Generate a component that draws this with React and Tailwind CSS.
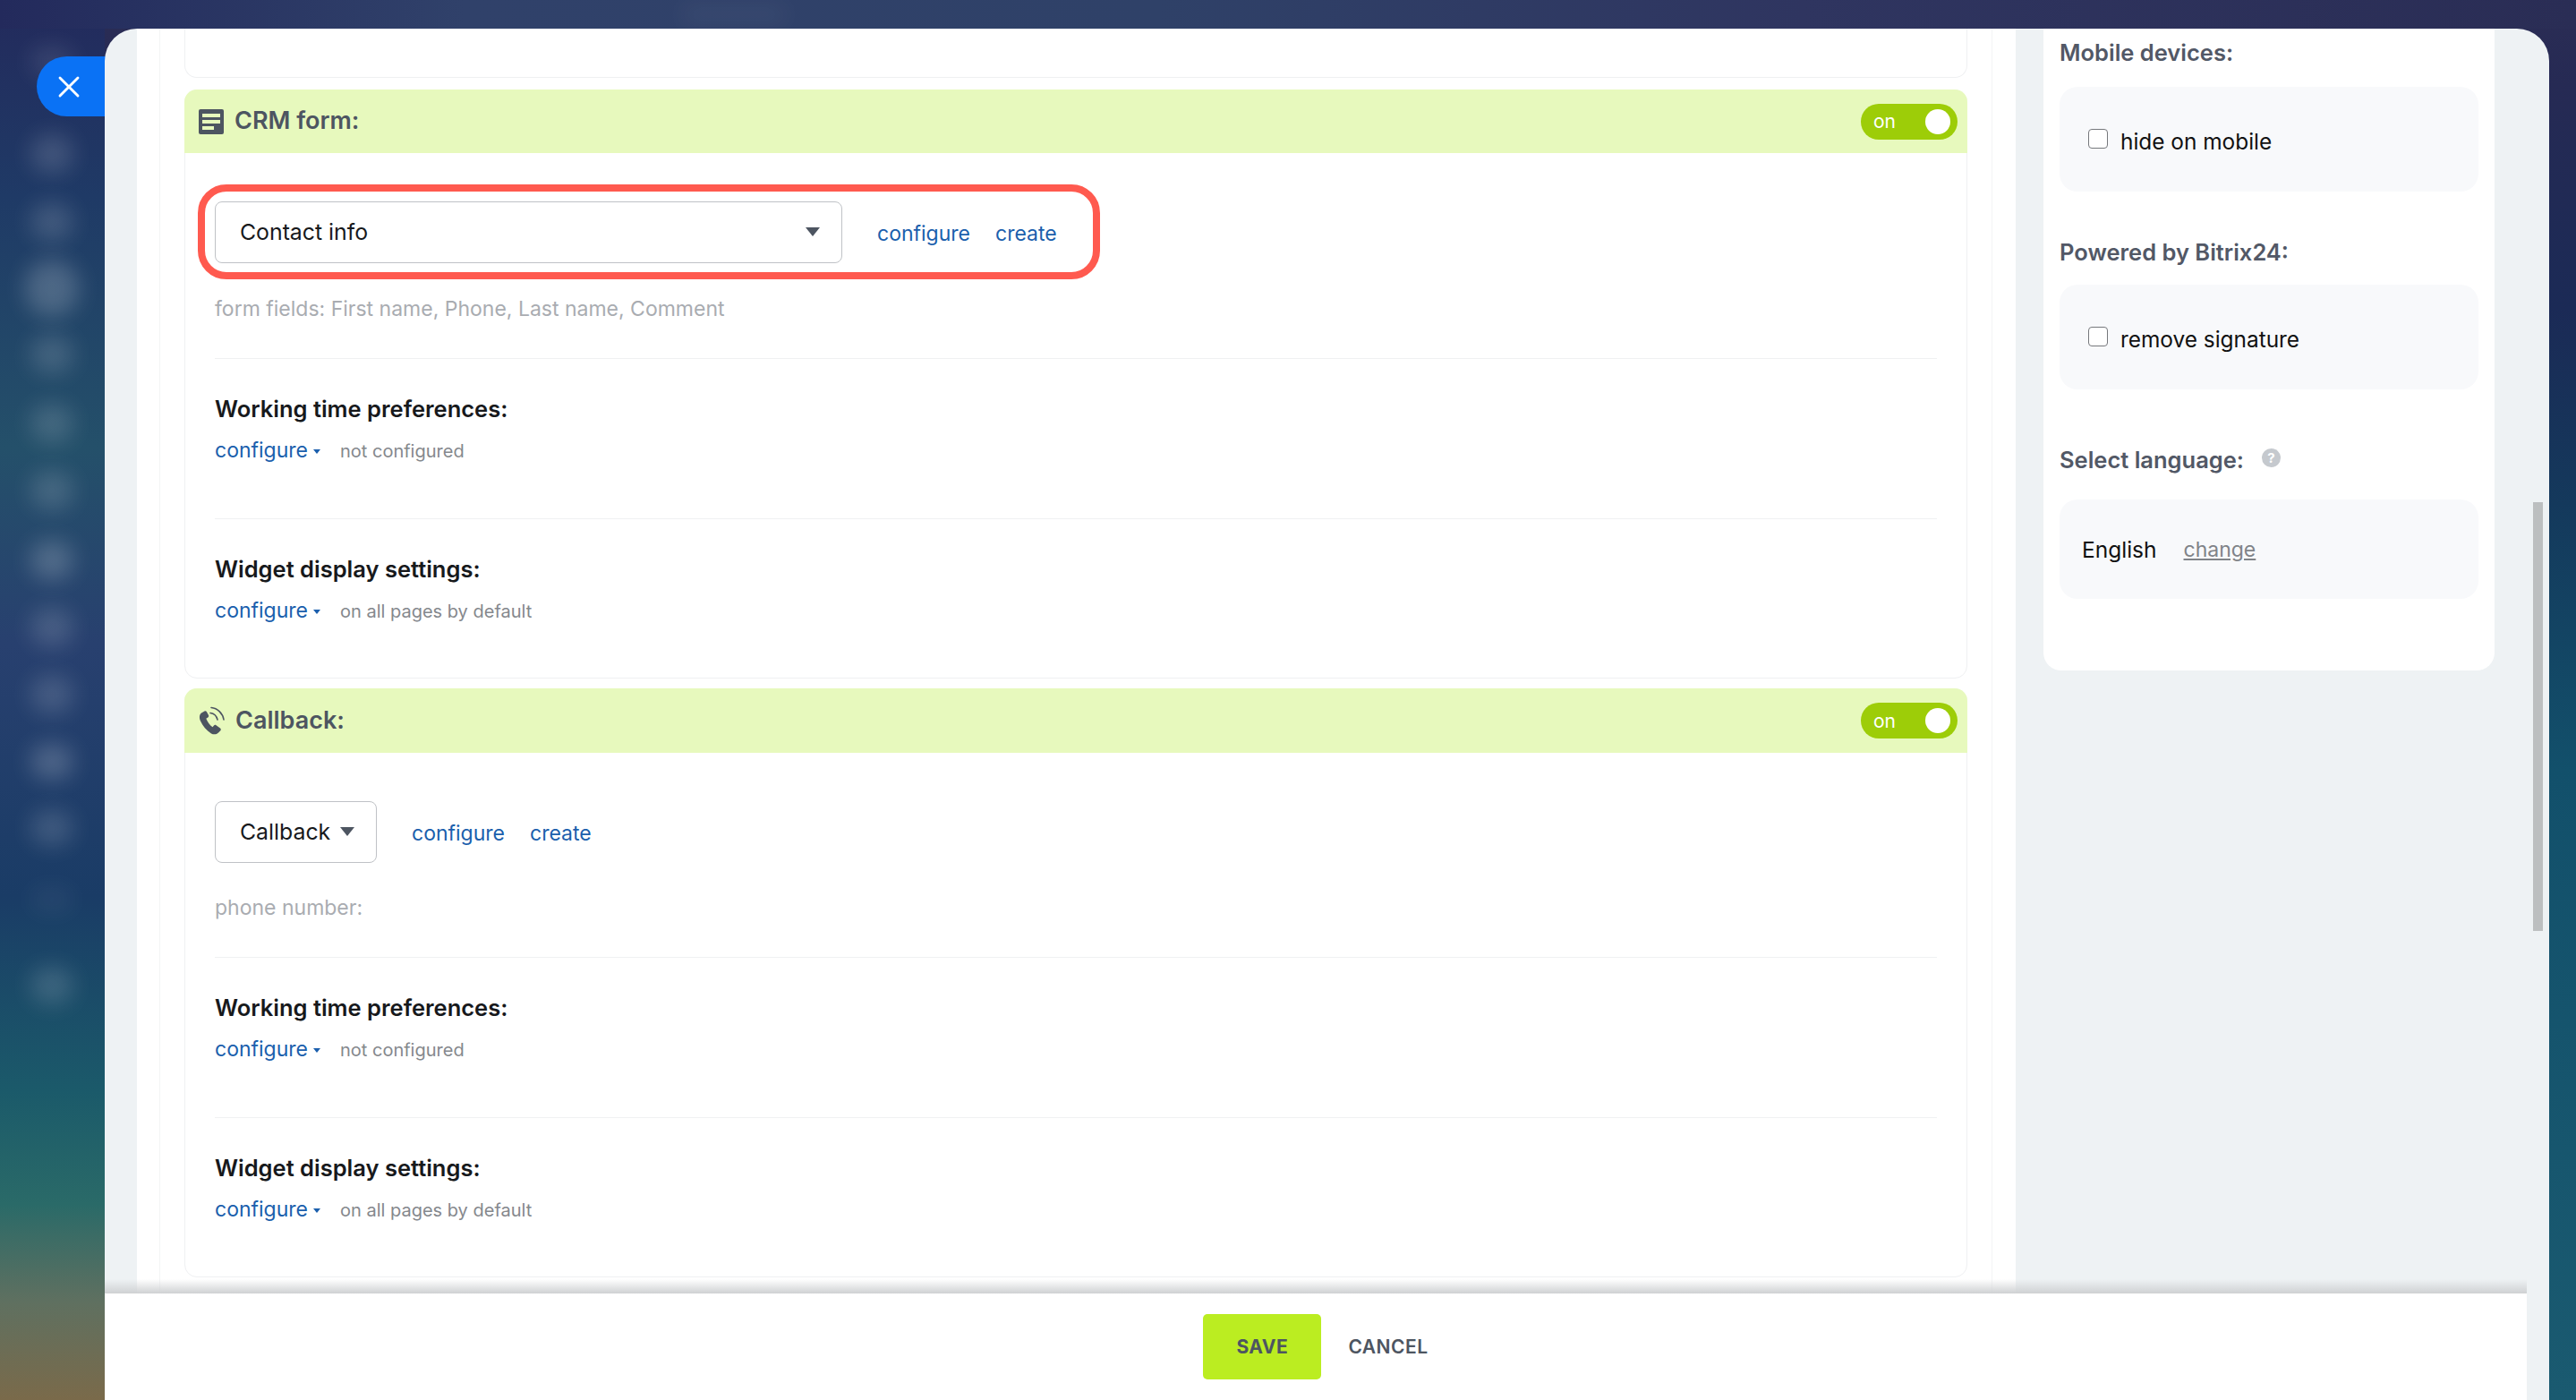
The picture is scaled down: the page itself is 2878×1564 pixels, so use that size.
import React from "react";
import { X } from "lucide-react";

const blobs = [
  "top-[52px] h-[34px] bg-white/10",
  "top-[150px] h-[44px] bg-white/15",
  "top-[226px] h-[44px] bg-white/15",
  "top-[290px] h-[64px] !left-[28px] !w-[60px] bg-white/20",
  "top-[374px] h-[44px] bg-white/15",
  "top-[451px] h-[44px] bg-white/15",
  "top-[526px] h-[44px] bg-white/15",
  "top-[604px] h-[44px] bg-white/20",
  "top-[679px] h-[44px] bg-white/15",
  "top-[754px] h-[44px] bg-white/15",
  "top-[831px] h-[40px] bg-white/20",
  "top-[905px] h-[40px] bg-white/15",
  "top-[990px] h-[30px] bg-white/5",
  "top-[1080px] h-[42px] bg-white/15",
];

function Toggle() {
  return (
    <div className="flex h-[40px] w-[108px] items-center justify-between rounded-full bg-[#9dcd08] pl-[14px] pr-[8px]">
      <span className="text-[21px] leading-none text-white">on</span>
      <span className="h-[28px] w-[28px] rounded-full bg-white" />
    </div>
  );
}

function Caret() {
  return <span className="h-0 w-0 -translate-y-[1px] border-x-[8px] border-t-[10px] border-x-transparent border-t-[#4d5561]" />;
}

function ConfigRow({ text }) {
  return (
    <div className="mt-[14px] flex h-[32px] items-center">
      <a className="text-[23px] text-[#1b5fad]">configure</a>
      <span className="ml-[6px] mt-[2px] h-0 w-0 border-x-[4px] border-t-[5px] border-x-transparent border-t-[#1b5fad]" />
      <span className="ml-[22px] mt-[2px] text-[20px] text-[#85888d]">{text}</span>
    </div>
  );
}

function FormIcon() {
  return (
    <svg width="28" height="28" viewBox="0 0 28 28" className="shrink-0">
      <rect width="28" height="28" rx="2" fill="#4d5561" />
      <rect x="4" y="5" width="20" height="4" fill="#e7f9bd" />
      <rect x="4" y="12" width="20" height="4" fill="#e7f9bd" />
      <rect x="4" y="19" width="13" height="4" fill="#e7f9bd" />
    </svg>
  );
}

function PhoneIcon() {
  return (
    <svg width="30" height="32" viewBox="0 0 30 32" fill="none" className="-mr-px shrink-0">
      <path d="M6.5 5.5 3 7.5C0.5 9.5 0.5 13 2 16.5 4.5 22 8.5 27 14 30.5 17 32 20 31.5 22 29.5L24.5 27 C25 26 24.8 25 24 24.4L19.5 21.2C18.6 20.6 17.6 20.8 17 21.5L15.5 23.2C12.5 21.2 9.5 17 8.3 13.7L10.3 12.4C11.2 11.7 11.4 10.8 11 9.9L8.8 6C8.3 5.2 7.3 5 6.5 5.5Z" fill="#4d5561" />
      <path d="M13 7.5C17 8 20 11 21 15" stroke="#4d5561" strokeWidth="1.6" strokeLinecap="round" />
      <path d="M14 1.5C21 2 27 8 28 15" stroke="#4d5561" strokeWidth="1.6" strokeLinecap="round" />
    </svg>
  );
}

function Section({ icon, title, headerHeight, selectBlock, hint, hintGap }) {
  return (
    <section className="rounded-[14px] border border-[#eff0f2] bg-white">
      <header className={"-m-px flex items-center justify-between rounded-t-[14px] bg-[#e7f9bd] pl-[16px] pr-[11px] " + headerHeight}>
        <div className="flex items-center gap-[12px]">
          {icon}
          <span className="text-[27px] font-semibold text-[#4d5561]">{title}</span>
        </div>
        <Toggle />
      </header>
      <div className="px-[33px] pb-[59px] pt-[55px]">
        {selectBlock}
        <p className={"h-[30px] text-[23px] leading-[30px] text-[#a9acb1] " + hintGap}>{hint}</p>
        <div className="mt-[40px] h-px bg-[#f0f1f2]" />
        <h3 className="mt-[40px] h-[32px] text-[25.5px] font-semibold leading-[32px] text-[#17191c]">Working time preferences:</h3>
        <ConfigRow text="not configured" />
        <div className="mt-[60px] h-px bg-[#f0f1f2]" />
        <h3 className="mt-[40px] h-[32px] text-[25.5px] font-semibold leading-[32px] text-[#17191c]">Widget display settings:</h3>
        <ConfigRow text="on all pages by default" />
      </div>
    </section>
  );
}

function Links() {
  return (
    <div className="ml-[39px] mt-[4px] flex items-center gap-[28px] text-[23px] text-[#1b5fad]">
      <a>configure</a>
      <a>create</a>
    </div>
  );
}

function SideBox({ children, className }) {
  return <div className={"flex items-center rounded-[20px] bg-[#f8f9fb] " + className}>{children}</div>;
}

function Check({ label }) {
  return (
    <label className="flex translate-y-[3px] items-center gap-[14px] text-[24.4px] text-[#111]">
      <input type="checkbox" className="h-[22px] w-[22px] -translate-y-[3px] appearance-none rounded-[4px] border-[1.5px] border-[#76787c] bg-white" />
      {label}
    </label>
  );
}

function SideTitle({ children, className }) {
  return <h4 className={"h-[32px] text-[25.5px] font-semibold leading-[32px] text-[#525866] " + className}>{children}</h4>;
}

export default function App() {
  return (
    <div className="relative flex h-[1564px] w-[2878px] overflow-hidden bg-[#16395e] bg-[linear-gradient(180deg,#232a5c_0%,#1f3a66_14%,#24506a_32%,#28406f_46%,#1a3c66_64%,#1b5a6a_78%,#2a6a68_86%,#5f7060_93%,#7a6a4a_100%)] pl-[117px] pr-[30px] pt-[32px] font-['Inter',sans-serif]">
      <div className="pointer-events-none absolute inset-y-0 left-[117px] right-0 bg-[linear-gradient(180deg,#2b2d55_0%,#262a54_6%,#1b2a56_22%,#14395c_36%,#12506b_55%,#1a5a70_100%)]" />
      <div className="pointer-events-none absolute inset-x-0 top-0 h-[32px] bg-[linear-gradient(90deg,#232a5c_0%,#30416a_18%,#2f4168_45%,#2f3560_70%,#2a2d55_100%)]" />
      <div className="absolute left-[760px] top-[6px] h-[20px] w-[120px] rounded-full bg-white/5 blur-md" />
      {blobs.map((c, i) => (
        <div key={i} className={"absolute left-[34px] w-[48px] rounded-full blur-[12px] " + c} />
      ))}

      <button className="absolute left-[41px] top-[63px] flex h-[67px] w-[90px] items-center rounded-l-full bg-[#0a72f5] pl-[16px] text-white">
        <X size={40} strokeWidth={1.7} />
      </button>

      <div className="relative flex h-[1532px] w-[2731px] flex-col overflow-hidden rounded-t-[36px] bg-[#eef2f4]">
        <div className="flex h-[1413px] min-h-0">
          <main className="ml-[36px] h-full w-[2099px] overflow-hidden bg-white pl-[25px] pr-[26px]">
            <div className="h-full border-x border-[#f3f4f5] px-[27px]">
              <div className="h-[55px] rounded-b-[14px] border border-t-0 border-[#eff0f2]" />
              <div className="mt-[13px] flex flex-col gap-[11px]">
                <Section
                  icon={<FormIcon />}
                  title="CRM form:"
                  headerHeight="h-[71px]"
                  hintGap="mt-[36px]"
                  hint="form fields: First name, Phone, Last name, Comment"
                  selectBlock={
                    <div className="relative flex items-center">
                      <div className="absolute -left-[19px] -top-[19px] h-[106px] w-[1008px] rounded-[32px] border-[8px] border-[#ff5a4f]" />
                      <div className="flex h-[69px] w-[701px] items-center justify-between rounded-[8px] border border-[#bfc2c6] pl-[27px] pr-[24px]">
                        <span className="text-[24.8px] text-[#17191c]">Contact info</span>
                        <Caret />
                      </div>
                      <Links />
                    </div>
                  }
                />
                <Section
                  icon={<PhoneIcon />}
                  title="Callback:"
                  headerHeight="h-[72px]"
                  hintGap="mt-[35px]"
                  hint="phone number:"
                  selectBlock={
                    <div className="flex items-center">
                      <div className="flex h-[69px] w-[181px] items-center justify-between rounded-[8px] border border-[#bfc2c6] pl-[27px] pr-[24px]">
                        <span className="text-[24.8px] text-[#17191c]">Callback</span>
                        <Caret />
                      </div>
                      <Links />
                    </div>
                  }
                />
              </div>
            </div>
          </main>

          <aside className="ml-[31px] mr-[61px] h-[717px] w-[504px] rounded-b-[20px] bg-white px-[18px]">
            <SideTitle className="mt-[11px]">Mobile devices:</SideTitle>
            <SideBox className="mt-[22px] h-[117px] pl-[32px]"><Check label="hide on mobile" /></SideBox>
            <SideTitle className="mt-[52px]">Powered by Bitrix24:</SideTitle>
            <SideBox className="mt-[20px] h-[117px] pl-[32px]"><Check label="remove signature" /></SideBox>
            <div className="mt-[63px] flex h-[32px] items-center gap-[20px]">
              <SideTitle>Select language:</SideTitle>
              <span className="flex h-[21px] w-[21px] -translate-y-[3px] items-center justify-center rounded-full bg-[#c5c9ce] text-[15px] font-bold leading-none text-white">?</span>
            </div>
            <SideBox className="mt-[28px] h-[111px] gap-[30px] pl-[25px]">
              <span className="translate-y-[1px] text-[24.5px] text-[#111]">English</span>
              <a className="translate-y-[1px] text-[23px] text-[#808388] underline">change</a>
            </SideBox>
          </aside>
        </div>

        <div className="pointer-events-none absolute left-0 right-[25px] top-[1397px] h-[16px] bg-gradient-to-b from-transparent to-[#cfd1d3]" />
        <div className="absolute right-[7px] top-[529px] h-[479px] w-[11px] bg-[#bcbfc0]" />

        <footer className="mr-[25px] flex h-[119px] items-start justify-center gap-[30px] bg-white pt-[23px]">
          <button className="h-[73px] w-[132px] rounded-[5px] bg-[#bbed21] text-[21px] font-bold tracking-[0.5px] text-[#4d5561]">SAVE</button>
          <button className="h-[73px] text-[21px] font-semibold tracking-[0.5px] text-[#4d5561]">CANCEL</button>
        </footer>
      </div>
    </div>
  );
}
